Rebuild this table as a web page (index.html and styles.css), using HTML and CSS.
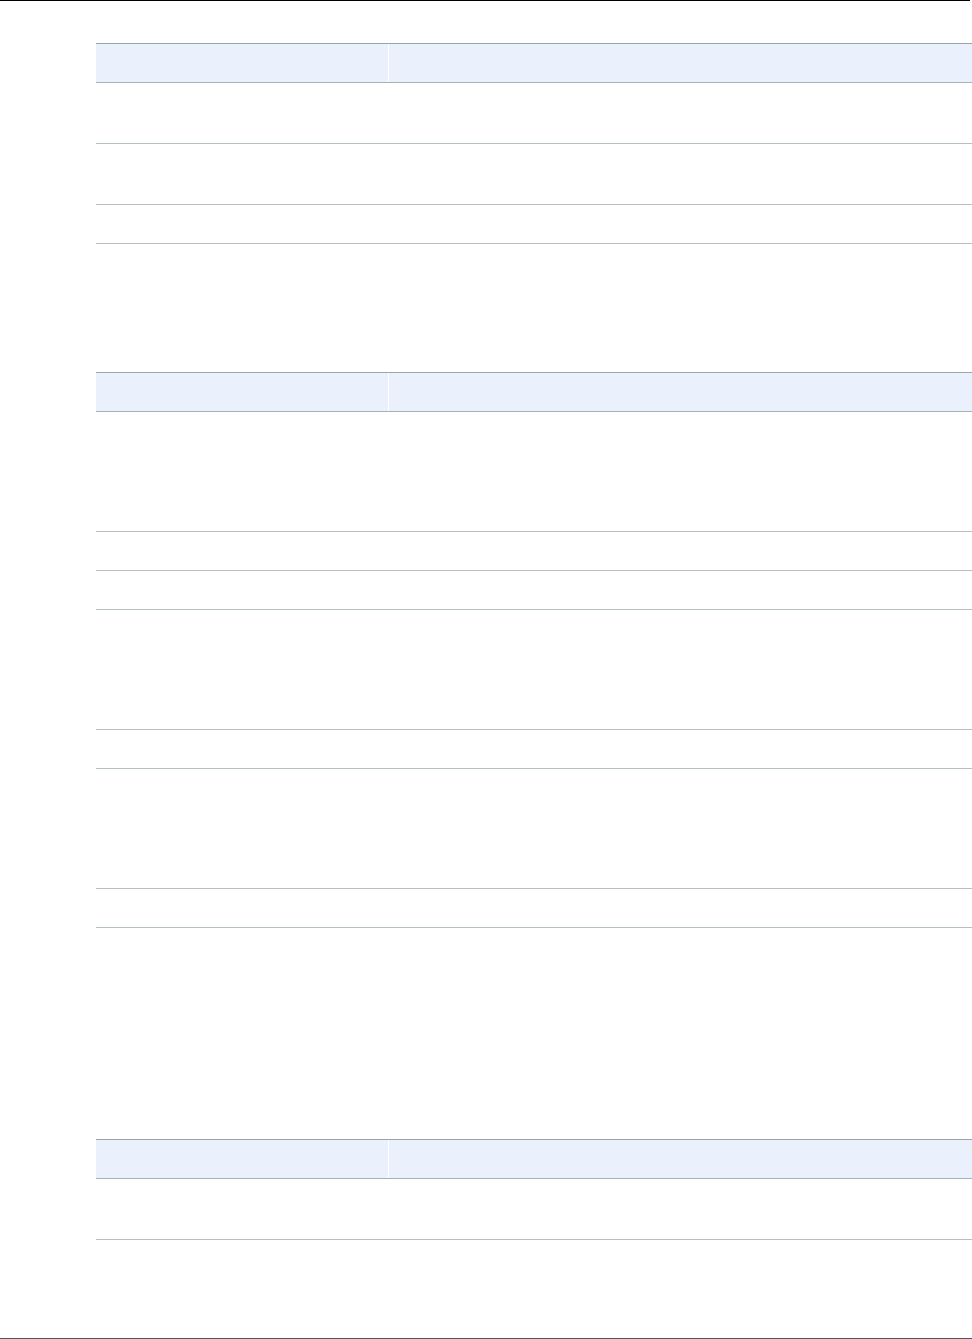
FILE: index.html
```html
<!DOCTYPE html>
<html>
<head>
    <title>Reference Tables</title>
    <link rel="stylesheet" href="styles.css">
</head>
<body>
    <div class="page">
        <div class="top-rule"></div>

        <div class="data-table first">
            <div class="row head"><div class="cell"></div><div class="cell"></div></div>
            <div class="row mid"><div class="cell"></div><div class="cell"></div></div>
            <div class="row mid"><div class="cell"></div><div class="cell"></div></div>
            <div class="row small"><div class="cell"></div><div class="cell"></div></div>
        </div>

        <div class="data-table second">
            <div class="row head"><div class="cell"></div><div class="cell"></div></div>
            <div class="row tall"><div class="cell"></div><div class="cell"></div></div>
            <div class="row small"><div class="cell"></div><div class="cell"></div></div>
            <div class="row small"><div class="cell"></div><div class="cell"></div></div>
            <div class="row tall"><div class="cell"></div><div class="cell"></div></div>
            <div class="row small"><div class="cell"></div><div class="cell"></div></div>
            <div class="row tall"><div class="cell"></div><div class="cell"></div></div>
            <div class="row small"><div class="cell"></div><div class="cell"></div></div>
        </div>

        <div class="data-table third">
            <div class="row head"><div class="cell"></div><div class="cell"></div></div>
            <div class="row mid"><div class="cell"></div><div class="cell"></div></div>
        </div>

        <div class="bottom-rule"></div>
    </div>
</body>
</html>
```

FILE: styles.css
```css
body {
    margin: 0;
    font-family: "Liberation Sans", Arial, sans-serif;
    background: #fff;
}
.page {
    min-height: 1339px;
    display: flex;
    flex-direction: column;
}
.top-rule {
    width: 970px;
    height: 1px;
    background-color: #000;
}
.bottom-rule {
    margin-top: auto;
    height: 1px;
    background-color: #555;
}
.data-table {
    margin-left: 96px;
    width: 876px;
}
.data-table.first {
    margin-top: 42px;
}
.data-table.second {
    margin-top: 128px;
}
.data-table.third {
    margin-top: 211px;
}
.row {
    display: grid;
    grid-template-columns: 292px 1fr;
    border-bottom: 1px solid #b4c0c0;
}
.row.head {
    border-top: 1px solid #9aa6a9;
    border-bottom-color: #a6b2b5;
}
.row.head .cell {
    background-color: #eaf1fc;
}
.row.head .cell + .cell {
    border-left: 1px solid #fff;
}
.row.head,
.row.small {
    height: 38px;
}
.row.mid {
    height: 60px;
}
.row.tall {
    height: 119px;
}
```
